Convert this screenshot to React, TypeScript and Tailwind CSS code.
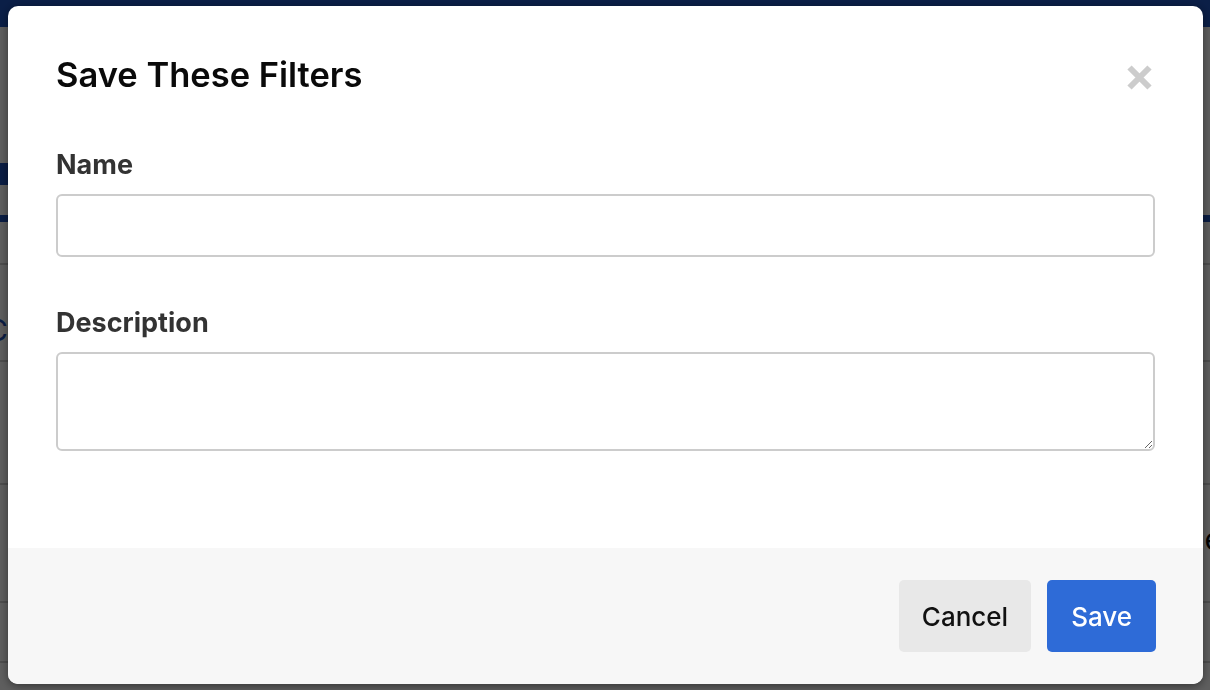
import React from 'react';

const font = { fontFamily: 'Inter, "Liberation Sans", sans-serif' };

const CloseIcon: React.FC = () => (
  <svg width="25" height="25" viewBox="0 0 25 25" aria-hidden="true">
    <path d="M2.5 2.5 L22.5 22.5 M22.5 2.5 L2.5 22.5" stroke="#cccccc" strokeWidth="6" strokeLinecap="butt" fill="none" />
  </svg>
);

// page that sits behind the dialog, mostly hidden by it
const BackgroundPage: React.FC = () => (
  <div className="min-h-[690px] bg-white flex flex-col">
    <div className="h-[27px] bg-[#1e54c0]" />
    <div className="h-[136px]" />
    <div className="h-[22px] flex">
      <div className="w-[8px] bg-[#1d4fb8]" />
    </div>
    <div className="h-[30px]" />
    <div className="h-[7px] bg-[#1d4fb8]" />
    <div className="h-[43px] border-b-2 border-[#cfcfcf]" />
    <div className="h-[97px] border-b-2 border-[#cfcfcf] flex items-start pt-[47px]">
      <span className="text-[30px] leading-[36px] text-[#1d4fb8] -ml-[14px]" style={font}>C</span>
    </div>
    <div className="h-[123px] border-b-2 border-[#cfcfcf]" />
    <div className="h-[118px] border-b-2 border-[#cfcfcf] flex items-start justify-end pt-[36px]">
      <span className="text-[30px] leading-[36px] text-black mr-[-12px]" style={font}>e</span>
    </div>
    <div className="h-[60px] border-b-2 border-[#cfcfcf]" />
  </div>
);

export default function App() {
  return (
    <div className="relative w-[1210px] h-[690px] overflow-hidden" style={font}>
      <BackgroundPage />
      <div className="fixed inset-0 bg-black/[0.63]" />
      <div className="fixed left-[8px] top-[6px] w-[1195px] h-[678px] bg-white rounded-[10px] overflow-hidden shadow-[0_2px_10px_rgba(0,0,0,0.45)] flex flex-col">
        <div className="h-[542px] px-12 pt-[47px]">
          <div className="flex items-center justify-between">
            <h2 className="text-[34.5px] leading-[44px] font-semibold text-[#0a0a0a]">Save These Filters</h2>
            <button className="mr-[3px] mt-[4px]">
              <CloseIcon />
            </button>
          </div>
          <label className="block mt-[54px] text-[27px] leading-[28px] font-bold text-[#333]">Name</label>
          <input
            type="text"
            className="block w-full mt-[15px] h-[63px] border-2 border-[#cccccc] rounded-[6px] px-4 text-[22px] outline-none"
          />
          <label className="block mt-[52px] text-[27px] leading-[28px] font-bold text-[#333]">Description</label>
          <textarea className="block w-full mt-[15px] h-[99px] border-2 border-[#cccccc] rounded-[6px] px-4 py-3 text-[22px] outline-none resize-y" />
        </div>
        <div className="flex-1 bg-[#f7f7f7] flex items-center justify-end gap-4 pr-[47px]">
          <button className="h-[72px] px-[23px] rounded-[5px] bg-[#e8e8e8] text-[26px] font-medium text-[#111]">Cancel</button>
          <button className="h-[72px] px-6 rounded-[5px] bg-[#2e6bd7] text-[26px] font-medium text-white">Save</button>
        </div>
      </div>
    </div>
  );
}
